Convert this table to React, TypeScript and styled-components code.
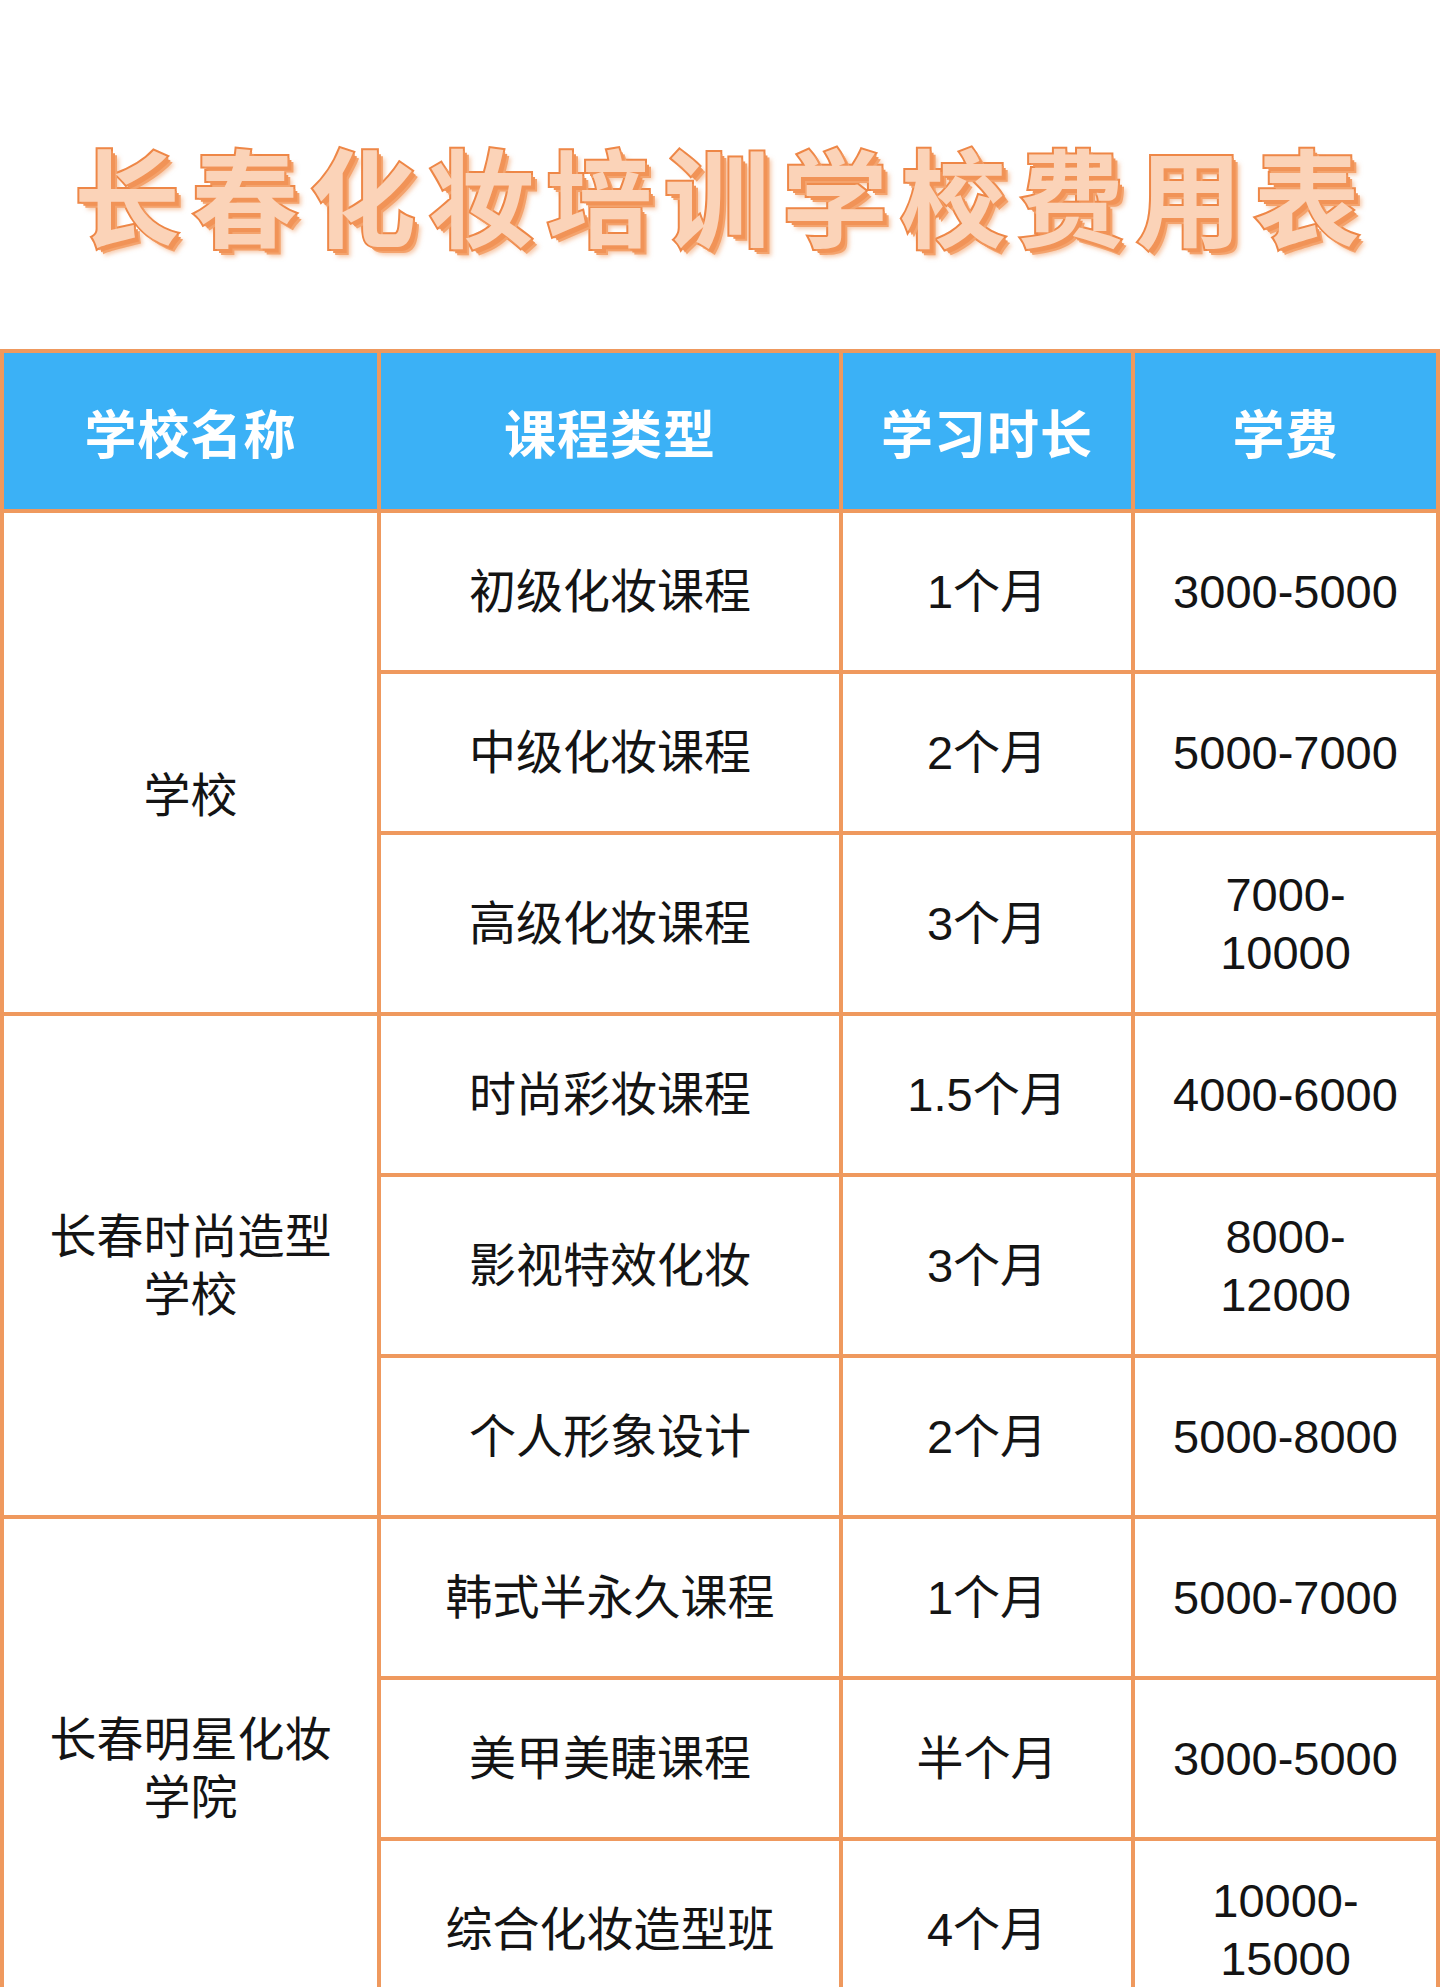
import React from "react";
import styled, { createGlobalStyle } from "styled-components";

const GlobalStyle = createGlobalStyle`
  html, body {
    margin: 0;
    padding: 0;
    background: #ffffff;
    overflow: hidden;
  }
  body {
    font-family: "Liberation Sans", "Noto Sans CJK SC", sans-serif;
  }
`;

const Page = styled.div`
  width: 1442px;
  background: #ffffff;
`;

const TitleBar = styled.div`
  height: 349px;
  box-sizing: border-box;
  padding-top: 36px;
  display: flex;
  align-items: center;
  justify-content: center;
`;

const Title = styled.h1`
  margin: 0;
  padding-left: 4px;
  font-family: "Noto Sans CJK SC", sans-serif;
  font-weight: 700;
  font-size: 106px;
  letter-spacing: 12px;
  line-height: 1;
  color: #fbd3b8;
  -webkit-text-stroke: 4px #ee8747;
  paint-order: stroke fill;
  text-shadow: 2px 2px 0 #f19357, 4px 4px 0 #f19357, 6px 6px 0 #f4a36d,
    8px 8px 4px rgba(240, 150, 90, 0.5);
`;

const Table = styled.div`
  width: 1440px;
  display: grid;
  grid-template-columns: 373px 458px 288px 301px;
  gap: 4px;
  padding: 4px;
  box-sizing: border-box;
  background: #ef995e;
`;

const HeadCell = styled.div`
  height: 156px;
  display: flex;
  align-items: center;
  justify-content: center;
  background: #3bb1f6;
  color: #ffffff;
  font-family: "Noto Sans CJK SC", sans-serif;
  font-weight: 700;
  font-size: 52px;
  letter-spacing: 1px;
`;

const Cell = styled.div<{ $tall?: boolean; $span?: number; $drop?: number }>`
  min-height: ${(p) => (p.$tall ? 177 : 157)}px;
  grid-row: ${(p) => (p.$span ? `span ${p.$span}` : "auto")};
  box-sizing: border-box;
  padding-top: ${(p) => p.$drop ?? 0}px;
  display: flex;
  align-items: center;
  justify-content: center;
  text-align: center;
  background: #ffffff;
  color: #141414;
  font-size: 47px;
  line-height: 58px;
  white-space: pre-line;
`;

type Course = [string, string, string];

// drop: the first school name sits a little below its group's middle
const groups: { school: string; drop: number; courses: Course[] }[] = [
  {
    school: "学校",
    drop: 66,
    courses: [
      ["初级化妆课程", "1个月", "3000-5000"],
      ["中级化妆课程", "2个月", "5000-7000"],
      ["高级化妆课程", "3个月", "7000-\n10000"],
    ],
  },
  {
    school: "长春时尚造型\n学校",
    drop: 0,
    courses: [
      ["时尚彩妆课程", "1.5个月", "4000-6000"],
      ["影视特效化妆", "3个月", "8000-\n12000"],
      ["个人形象设计", "2个月", "5000-8000"],
    ],
  },
  {
    school: "长春明星化妆\n学院",
    drop: 0,
    courses: [
      ["韩式半永久课程", "1个月", "5000-7000"],
      ["美甲美睫课程", "半个月", "3000-5000"],
      ["综合化妆造型班", "4个月", "10000-\n15000"],
    ],
  },
];

const headers = ["学校名称", "课程类型", "学习时长", "学费"];

export default function App() {
  return (
    <Page>
      <GlobalStyle />
      <TitleBar>
        <Title>长春化妆培训学校费用表</Title>
      </TitleBar>
      <Table>
        {headers.map((h) => (
          <HeadCell key={h}>{h}</HeadCell>
        ))}
        {groups.map((g) => (
          <React.Fragment key={g.school}>
            <Cell $span={g.courses.length} $drop={g.drop}>
              {g.school}
            </Cell>
            {g.courses.map(([name, time, fee]) => {
              const tall = fee.includes("\n");
              return (
                <React.Fragment key={name}>
                  <Cell $tall={tall}>{name}</Cell>
                  <Cell $tall={tall}>{time}</Cell>
                  <Cell $tall={tall}>{fee}</Cell>
                </React.Fragment>
              );
            })}
          </React.Fragment>
        ))}
      </Table>
    </Page>
  );
}
